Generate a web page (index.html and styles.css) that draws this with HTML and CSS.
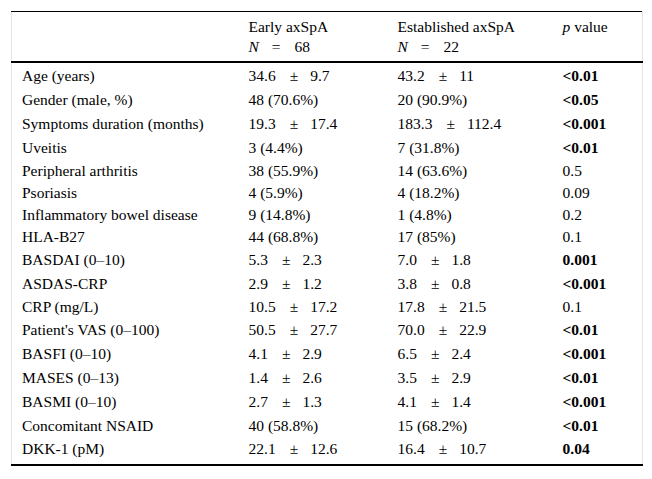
FILE: index.html
```html
<!DOCTYPE html>
<html>
<head>
<meta charset="utf-8">
<link rel="stylesheet" href="styles.css">
</head>
<body>
<div class="wrap">
<table class="tbl">
  <colgroup>
    <col class="c1"><col class="c2"><col class="c3"><col class="c4">
  </colgroup>
  <thead>
    <tr class="head">
      <th></th>
      <th>Early axSpA<br><i>N</i><span class="eq">=</span>68</th>
      <th>Established axSpA<br><i>N</i><span class="eq">=</span>22</th>
      <th><i>p</i> value</th>
    </tr>
  </thead>
  <tbody>
    <tr class="b"><td>Age (years)</td><td>34.6<span class="pm">±</span>9.7</td><td>43.2<span class="pm">±</span>11</td><td><b>&lt;0.01</b></td></tr>
    <tr class="b"><td>Gender (male, %)</td><td>48 (70.6%)</td><td>20 (90.9%)</td><td><b>&lt;0.05</b></td></tr>
    <tr class="b"><td>Symptoms duration (months)</td><td>19.3<span class="pm">±</span>17.4</td><td>183.3<span class="pm">±</span>112.4</td><td><b>&lt;0.001</b></td></tr>
    <tr class="b"><td>Uveitis</td><td>3 (4.4%)</td><td>7 (31.8%)</td><td><b>&lt;0.01</b></td></tr>
    <tr class="n"><td>Peripheral arthritis</td><td>38 (55.9%)</td><td>14 (63.6%)</td><td>0.5</td></tr>
    <tr class="n"><td>Psoriasis</td><td>4 (5.9%)</td><td>4 (18.2%)</td><td>0.09</td></tr>
    <tr class="n"><td>Inflammatory bowel disease</td><td>9 (14.8%)</td><td>1 (4.8%)</td><td>0.2</td></tr>
    <tr class="n"><td>HLA-B27</td><td>44 (68.8%)</td><td>17 (85%)</td><td>0.1</td></tr>
    <tr class="b"><td>BASDAI (0–10)</td><td>5.3<span class="pm">±</span>2.3</td><td>7.0<span class="pm">±</span>1.8</td><td><b>0.001</b></td></tr>
    <tr class="b"><td>ASDAS-CRP</td><td>2.9<span class="pm">±</span>1.2</td><td>3.8<span class="pm">±</span>0.8</td><td><b>&lt;0.001</b></td></tr>
    <tr class="n"><td>CRP (mg/L)</td><td>10.5<span class="pm">±</span>17.2</td><td>17.8<span class="pm">±</span>21.5</td><td>0.1</td></tr>
    <tr class="b"><td>Patient's VAS (0–100)</td><td>50.5<span class="pm">±</span>27.7</td><td>70.0<span class="pm">±</span>22.9</td><td><b>&lt;0.01</b></td></tr>
    <tr class="b"><td>BASFI (0–10)</td><td>4.1<span class="pm">±</span>2.9</td><td>6.5<span class="pm">±</span>2.4</td><td><b>&lt;0.001</b></td></tr>
    <tr class="b"><td>MASES (0–13)</td><td>1.4<span class="pm">±</span>2.6</td><td>3.5<span class="pm">±</span>2.9</td><td><b>&lt;0.01</b></td></tr>
    <tr class="b"><td>BASMI (0–10)</td><td>2.7<span class="pm">±</span>1.3</td><td>4.1<span class="pm">±</span>1.4</td><td><b>&lt;0.001</b></td></tr>
    <tr class="b"><td>Concomitant NSAID</td><td>40 (58.8%)</td><td>15 (68.2%)</td><td><b>&lt;0.01</b></td></tr>
    <tr class="b last"><td>DKK-1 (pM)</td><td>22.1<span class="pm">±</span>12.6</td><td>16.4<span class="pm">±</span>10.7</td><td><b>0.04</b></td></tr>
  </tbody>
</table>
</div>
</body>
</html>
```

FILE: styles.css
```css
html, body {
  margin: 0;
  padding: 0;
  background: #fff;
}
.wrap {
  padding: 11px 0 0 11px;
}
.tbl {
  width: 631px;
  border-collapse: collapse;
  table-layout: fixed;
  font-family: "Liberation Serif", "Times New Roman", serif;
  font-size: 15.5px;
  line-height: 18px;
  color: #000;
  border-left: 1px solid #e4e4e4;
  border-right: 1px solid #e4e4e4;
  border-top: 1px solid #000;
  border-bottom: 2px solid #000;
}
.c1 { width: 227px; }
.c2 { width: 149px; }
.c3 { width: 165px; }
.c4 { width: 90px; }
.tbl th, .tbl td {
  padding: 0 0 0 10px;
  text-align: left;
  vertical-align: middle;
  white-space: nowrap;
}
.tbl th {
  font-weight: normal;
  vertical-align: top;
  line-height: 20px;
  padding-top: 5px;
  height: 44px;
  border-bottom: 2px solid #000;
}
.tbl tr.b td { height: 22px; padding-top: 2px; }
.tbl tr.n td { height: 20px; padding-top: 2px; }
.tbl tr.last td { height: 24px; vertical-align: top; padding-top: 3px; }
.tbl b { font-weight: bold; }
.pm {
  margin: 0 12px 0 14px;
}
.eq {
  margin: 0 14px 0 13px;
}
```
